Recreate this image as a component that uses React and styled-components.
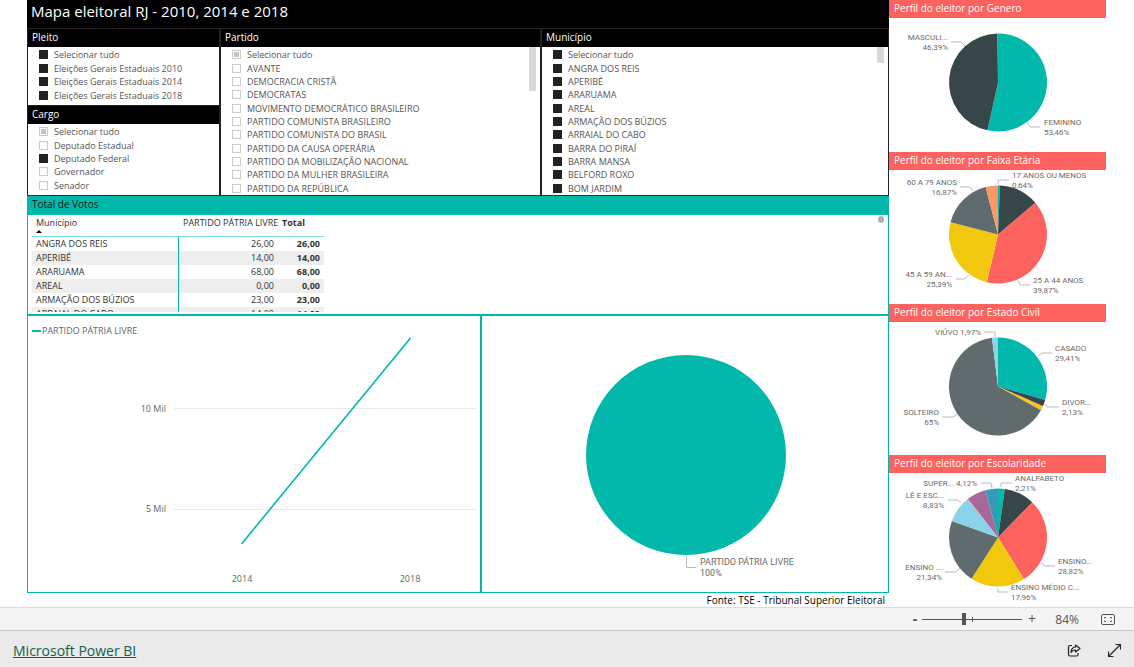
import React, { useState } from "react";
import styled, { createGlobalStyle } from "styled-components";

const TEAL = "#01b8aa";
const DARK = "#374649";
const RED = "#fd625e";
const YELLOW = "#f2c80f";
const GREY = "#5f6b6d";
const SKY = "#8ad4eb";
const ORANGE = "#fe9666";
const PURPLE = "#a66999";
const BLUE = "#3599b8";

const pleitos = [
  { name: "Selecionar tudo", state: "on" },
  { name: "Eleições Gerais Estaduais 2010", state: "on" },
  { name: "Eleições Gerais Estaduais 2014", state: "on" },
  { name: "Eleições Gerais Estaduais 2018", state: "on" },
];

const cargos = [
  { name: "Selecionar tudo", state: "partial" },
  { name: "Deputado Estadual" },
  { name: "Deputado Federal", state: "on" },
  { name: "Governador" },
  { name: "Senador" },
];

const partidos = [
  { name: "Selecionar tudo", state: "partial" },
  { name: "AVANTE" },
  { name: "DEMOCRACIA CRISTÃ" },
  { name: "DEMOCRATAS" },
  { name: "MOVIMENTO DEMOCRÁTICO BRASILEIRO" },
  { name: "PARTIDO COMUNISTA BRASILEIRO" },
  { name: "PARTIDO COMUNISTA DO BRASIL" },
  { name: "PARTIDO DA CAUSA OPERÁRIA" },
  { name: "PARTIDO DA MOBILIZAÇÃO NACIONAL" },
  { name: "PARTIDO DA MULHER BRASILEIRA" },
  { name: "PARTIDO DA REPÚBLICA" },
];

const municipios = [
  "Selecionar tudo",
  "ANGRA DOS REIS",
  "APERIBÉ",
  "ARARUAMA",
  "AREAL",
  "ARMAÇÃO DOS BÚZIOS",
  "ARRAIAL DO CABO",
  "BARRA DO PIRAÍ",
  "BARRA MANSA",
  "BELFORD ROXO",
  "BOM JARDIM",
].map(name => ({ name, state: "on" }));

const votos = [
  ["ANGRA DOS REIS", "26,00"],
  ["APERIBÉ", "14,00"],
  ["ARARUAMA", "68,00"],
  ["AREAL", "0,00"],
  ["ARMAÇÃO DOS BÚZIOS", "23,00"],
  ["ARRAIAL DO CABO", "14,00"],
];

const perfis = [
  {
    title: "Perfil do eleitor por Genero",
    slices: [
      [53.46, TEAL],
      [46.39, DARK],
      [0.15, RED],
    ],
    labels: [
      { x: 59, y: 22, end: true, lines: ["MASCULI...", "46,39%"], path: "62,24 72,24 76,28" },
      { x: 155, y: 107, lines: ["FEMININO", "53,46%"], path: "138,105 141,109 151,109" },
    ],
  },
  {
    title: "Perfil do eleitor por Faixa Etária",
    slices: [
      [0.64, TEAL],
      [13.16, DARK],
      [39.87, RED],
      [25.39, YELLOW],
      [16.87, GREY],
      [4.07, ORANGE],
    ],
    labels: [
      { x: 123, y: 8, lines: ["17 ANOS OU MENOS", "0,64%"], path: "109,14 109,10 120,10" },
      { x: 68, y: 15, end: true, lines: ["60 A 79 ANOS", "16,87%"], path: "71,17 81,17 84,21" },
      { x: 63, y: 107, end: true, lines: ["45 A 59 AN...", "25,39%"], path: "67,109 76,109 80,105" },
      { x: 144, y: 113, lines: ["25 A 44 ANOS", "39,87%"], path: "129,110 131,115 141,115" },
    ],
  },
  {
    title: "Perfil do eleitor por Estado Civil",
    slices: [
      [29.41, TEAL],
      [2.13, DARK],
      [0.2, RED],
      [1.29, YELLOW],
      [65, GREY],
      [1.97, SKY],
    ],
    labels: [
      { x: 92, y: 13, end: true, lines: ["VIÚVO 1,97%"], path: "95,10 106,10 106,15" },
      { x: 166, y: 29, lines: ["CASADO", "29,41%"], path: "149,34 153,31 163,31" },
      { x: 173, y: 83, lines: ["DIVOR...", "2,13%"], path: "155,82 159,85 170,85" },
      { x: 50, y: 93, end: true, lines: ["SOLTEIRO", "65%"], path: "53,95 64,95 69,92" },
    ],
  },
  {
    title: "Perfil do eleitor por Escolaridade",
    slices: [
      [2.21, TEAL],
      [10.1, DARK],
      [28.82, RED],
      [17.96, YELLOW],
      [21.34, GREY],
      [8.83, SKY],
      [0.25, ORANGE],
      [6.37, PURPLE],
      [4.12, BLUE],
    ],
    labels: [
      { x: 88, y: 13, end: true, lines: ["SUPER... 4,12%"], path: "92,10 102,10 103,15" },
      { x: 126, y: 8, lines: ["ANALFABETO", "2,21%"], path: "112,14 112,10 123,10" },
      { x: 55, y: 25, end: true, lines: ["LÊ E ESC...", "8,83%"], path: "59,27 69,27 72,30" },
      { x: 53, y: 97, end: true, lines: ["ENSINO ...", "21,34%"], path: "56,99 67,99 71,95" },
      { x: 122, y: 117, lines: ["ENSINO MÉDIO C...", "17,96%"], path: "109,115 109,119 119,119" },
      { x: 169, y: 91, lines: ["ENSINO...", "28,82%"], path: "152,90 156,93 166,93" },
    ],
  },
];

const slicePath = (cx, cy, r, from, to) => {
  const point = pct => {
    const a = (pct / 100) * Math.PI * 2;
    return `${cx + r * Math.sin(a)} ${cy - r * Math.cos(a)}`;
  };
  return `M${cx} ${cy}L${point(from)}A${r} ${r} 0 ${to - from > 50 ? 1 : 0} 1 ${point(to)}Z`;
};

function Slicer({ title, items, thumb, compact }) {
  return (
    <SlicerPanel>
      <SlicerTitle>{title}</SlicerTitle>
      <SlicerBody $compact={compact}>
        <Options>
          {items.map(item => (
            <Option key={item.name}>
              <Check
                type='checkbox'
                defaultChecked={item.state === "on"}
                $partial={item.state === "partial"}
              />
              {item.name}
            </Option>
          ))}
        </Options>
        {thumb && <ScrollThumb $size={thumb} />}
      </SlicerBody>
    </SlicerPanel>
  );
}

function Perfil({ title, slices, labels }) {
  let total = 0;
  return (
    <PerfilCard>
      <PerfilTitle>{title}</PerfilTitle>
      <PerfilChart viewBox='0 0 217 133' role='img' aria-label={title}>
        {slices.map(([value, color], i) => {
          const from = total;
          total += value;
          return <path key={i} d={slicePath(109, 64.5, 49, from, total)} fill={color} />;
        })}
        {labels.map(label => (
          <g key={label.lines[0]}>
            <Leader points={label.path} />
            {label.lines.map((line, i) => (
              <PieText key={line} x={label.x} y={label.y + i * 10} $end={label.end}>
                {line}
              </PieText>
            ))}
          </g>
        ))}
      </PerfilChart>
    </PerfilCard>
  );
}

function App() {
  const [zoom, setZoom] = useState(84);

  return (
    <>
      <GlobalStyle />
      <Report>
        <Main>
          <Title>Mapa eleitoral RJ - 2010, 2014 e 2018</Title>
          <Slicers>
            <SlicerStack>
              <Slicer title='Pleito' items={pleitos} compact />
              <Slicer title='Cargo' items={cargos} compact />
            </SlicerStack>
            <Slicer title='Partido' items={partidos} thumb={44} />
            <Slicer title='Município' items={municipios} thumb={16} />
          </Slicers>

          <Votes>
            <VotesTitle>Total de Votos</VotesTitle>
            <VotesBody>
              <VotesTable>
                <thead>
                  <tr>
                    <th>
                      Município
                      <SortMark viewBox='0 0 6 3'>
                        <path d='M0 3L3 0L6 3Z' />
                      </SortMark>
                    </th>
                    <th>PARTIDO PÁTRIA LIVRE</th>
                    <th>Total</th>
                  </tr>
                </thead>
                <tbody>
                  {votos.map(([name, total]) => (
                    <tr key={name}>
                      <td>{name}</td>
                      <td>{total}</td>
                      <td>{total}</td>
                    </tr>
                  ))}
                </tbody>
              </VotesTable>
              <VotesThumb />
            </VotesBody>
          </Votes>

          <Charts>
            <ChartPanel>
              <Chart viewBox='0 0 452 276' role='img' aria-label='Votos por ano'>
                <path d='M4 15H13' stroke={TEAL} strokeWidth='2' />
                <AxisText x='14' y='18'>
                  PARTIDO PÁTRIA LIVRE
                </AxisText>
                <path d='M146 92.5H449M146 193.5H449' stroke='#eaeaea' />
                <AxisText x='138' y='96' $anchor='end'>
                  10 Mil
                </AxisText>
                <AxisText x='138' y='196' $anchor='end'>
                  5 Mil
                </AxisText>
                <AxisText x='214' y='266' $anchor='middle'>
                  2014
                </AxisText>
                <AxisText x='382' y='266' $anchor='middle'>
                  2018
                </AxisText>
                <path d='M213.5 228L382.5 22' stroke={TEAL} strokeWidth='1.6' />
              </Chart>
            </ChartPanel>
            <ChartPanel>
              <Chart viewBox='0 0 406 276' role='img' aria-label='Votos por partido'>
                <circle cx='204' cy='139' r='100' fill={TEAL} />
                <Leader points='204.5,241 204.5,251.5 214,251.5' />
                <PieText x='218' y='249' $large>
                  PARTIDO PÁTRIA LIVRE
                </PieText>
                <PieText x='218' y='260' $large>
                  100%
                </PieText>
              </Chart>
            </ChartPanel>
          </Charts>
          <Source>Fonte: TSE - Tribunal Superior Eleitoral</Source>
        </Main>

        <Side>
          {perfis.map(perfil => (
            <Perfil key={perfil.title} {...perfil} />
          ))}
        </Side>
      </Report>

      <ZoomBar>
        <ZoomButton aria-label='Diminuir' $bold onClick={() => setZoom(zoom - 1)}>
          -
        </ZoomButton>
        <ZoomSlider
          type='range'
          min='0'
          max='200'
          aria-label='Zoom'
          value={zoom}
          onChange={e => setZoom(Number(e.target.value))}
        />
        <ZoomButton aria-label='Aumentar' onClick={() => setZoom(zoom + 1)}>
          +
        </ZoomButton>
        <ZoomValue>{zoom}%</ZoomValue>
        <IconButton aria-label='Ajustar à página'>
          <svg width='14' height='11' viewBox='0 0 14 11' fill='none' stroke='#555'>
            <rect x='0.5' y='0.5' width='13' height='10' rx='1.5' />
            <path d='M3.5 4.5V3.5H5M9 3.5H10.5V4.5M10.5 6.5V7.5H9M5 7.5H3.5V6.5' />
          </svg>
        </IconButton>
      </ZoomBar>

      <Footer>
        <BrandLink href='#'>Microsoft Power BI</BrandLink>
        <IconButton aria-label='Compartilhar'>
          <svg width='14' height='13' viewBox='0 0 14 13' fill='none' stroke='#222'>
            <path d='M5 1.5H3Q1.5 1.5 1.5 3V10.5Q1.5 12 3 12H9.5Q11 12 11 10.5V9' strokeWidth='1.2' />
            <path
              d='M8.5 1L13 4.5L8.5 8V6Q5.5 5.8 4 8.5Q4.2 3.5 8.5 3Z'
              strokeWidth='1.2'
              strokeLinejoin='round'
            />
          </svg>
        </IconButton>
        <IconButton aria-label='Tela inteira'>
          <svg width='13' height='13' viewBox='0 0 13 13' fill='none' stroke='#222'>
            <path d='M0.5 12.5L12.5 0.5M7.5 0.5H12.5V5.5M0.5 7.5V12.5H5.5' strokeWidth='1.2' />
          </svg>
        </IconButton>
      </Footer>
    </>
  );
}

const GlobalStyle = createGlobalStyle`
  * {
    box-sizing: border-box;
  }
  body {
    margin: 0;
    background: #fff;
    color: #333;
    font-family: "Open Sans", "Noto Sans", sans-serif;
    font-size: 9px;
  }
  button {
    padding: 0;
    border: 0;
    background: none;
    font-family: inherit;
    color: inherit;
  }
`;

const Report = styled.div`
  display: grid;
  grid-template-columns: minmax(0, 1fr) 217px;
  padding: 0 28px 0 27px;
`;

const Main = styled.main`
  display: flex;
  flex-direction: column;
`;

const Title = styled.h1`
  height: 28px;
  margin: 0;
  padding-left: 4px;
  background: #000;
  color: #fff;
  font-size: 15px;
  font-weight: 400;
  line-height: 22px;
`;

const Slicers = styled.div`
  display: grid;
  grid-template-columns: 193fr 321fr 348fr;
  height: 168px;
  border-bottom: 1px solid #333;
`;

const SlicerStack = styled.div`
  display: grid;
  grid-template-rows: 77px 1fr;
`;

const SlicerPanel = styled.section`
  display: flex;
  flex-direction: column;
  border: 1px solid #222;
  border-width: 1px 1px 0;
`;

const SlicerTitle = styled.h2`
  height: 18px;
  margin: 0;
  padding-left: 4px;
  background: #000;
  color: #fff;
  font-size: 10px;
  font-weight: 400;
  line-height: 16px;
`;

const SlicerBody = styled.div`
  display: flex;
  flex: 1;
  padding: 0 4px ${({ $compact }) => ($compact ? 3 : 0)}px 11px;
`;

const Options = styled.div`
  display: grid;
  grid-auto-rows: 1fr;
  flex: 1;
  padding-top: 1px;
`;

const Option = styled.label`
  display: flex;
  align-items: center;
  gap: 6px;
  color: #555;
  line-height: 13px;
`;

const Check = styled.input`
  appearance: none;
  width: 9px;
  height: 9px;
  margin: 0;
  border: 1px solid #ccc;
  background: ${({ $partial }) => ($partial ? "#c4c4c4" : "#fff")};
  box-shadow: inset 0 0 0 1px #fff;

  &:checked {
    border-color: #222;
    background: #222;
    box-shadow: none;
  }
`;

const ScrollThumb = styled.div`
  width: 7px;
  height: ${({ $size }) => $size}px;
  background: #d9d9d9;
`;

const Votes = styled.section`
  height: 120px;
  border: 1px solid ${TEAL};
  border-width: 0 1px 2px;
`;

const VotesTitle = styled.h2`
  height: 19px;
  margin: 0;
  padding-left: 4px;
  background: ${TEAL};
  color: #111;
  font-size: 10px;
  font-weight: 400;
  line-height: 17px;
`;

const VotesBody = styled.div`
  display: flex;
  align-items: flex-start;
  justify-content: space-between;
  height: 97px;
  padding: 0 4px;
  overflow: hidden;
`;

const VotesTable = styled.table`
  width: 292px;
  border-spacing: 0;
  table-layout: fixed;

  th {
    height: 22px;
    padding: 1px 4px 0;
    border-bottom: 1px solid #80dbd4;
    font-weight: 400;
    line-height: 14px;
    text-align: left;
    vertical-align: top;
    white-space: nowrap;
  }
  th:first-child {
    width: 147px;
  }
  th:last-child {
    width: 46px;
    font-weight: 700;
  }
  td {
    height: 14px;
    padding: 0 4px;
    line-height: 14px;
    text-align: right;
  }
  td:first-child {
    border-right: 1px solid ${TEAL};
    text-align: left;
  }
  td:last-child {
    font-weight: 700;
  }
  tbody tr:nth-child(even) {
    background: #eee;
  }
`;

const SortMark = styled.svg`
  display: block;
  width: 6px;
  height: 3px;
`;

const VotesThumb = styled.div`
  width: 6px;
  height: 7px;
  margin-top: 1px;
  border-radius: 3px;
  background: #b3b3b3;
`;

const Charts = styled.div`
  display: grid;
  grid-template-columns: 454fr 408fr;
`;

const ChartPanel = styled.section`
  border: 1px solid ${TEAL};
  border-top: 0;
`;

const Chart = styled.svg`
  display: block;
  width: 100%;
  height: 276px;
`;

const AxisText = styled.text`
  fill: #666;
  text-anchor: ${({ $anchor }) => $anchor || "start"};
`;

const Leader = styled.polyline`
  fill: none;
  stroke: #bbb;
`;

const Source = styled.p`
  height: 14px;
  margin: 0;
  padding-right: 4px;
  color: #000;
  font-size: 10px;
  line-height: 15px;
  text-align: right;
`;

const Side = styled.aside`
  display: grid;
  grid-template-rows: repeat(4, 1fr);
`;

const PerfilCard = styled.section`
  overflow: hidden;
`;

const PerfilTitle = styled.h2`
  height: 18px;
  margin: 0;
  padding-left: 5px;
  background: ${RED};
  color: #fff;
  font-size: 10px;
  font-weight: 400;
  line-height: 16px;
`;

const PerfilChart = styled.svg`
  display: block;
  width: 100%;
  height: 133px;
`;

const PieText = styled.text`
  fill: #6b6b6b;
  font-family: Roboto, sans-serif;
  font-size: ${({ $large }) => ($large ? 9 : 8)}px;
  text-anchor: ${({ $end }) => ($end ? "end" : "start")};
`;

const ZoomBar = styled.div`
  display: flex;
  align-items: center;
  justify-content: flex-end;
  height: 23px;
  padding-right: 19px;
  border-top: 1px solid #dcdcdc;
  background: #f4f4f4;
  color: #555;
`;

const ZoomButton = styled.button`
  width: 14px;
  font-size: 14px;
  font-weight: ${({ $bold }) => ($bold ? 700 : 400)};
  line-height: 20px;
`;

const ZoomSlider = styled.input`
  appearance: none;
  width: 100px;
  height: 12px;
  margin: 0 3px 0 0;
  background: linear-gradient(#555, #555) center / 100% 1px no-repeat,
    linear-gradient(#555, #555) center / 1px 5px no-repeat;

  &::-webkit-slider-thumb {
    appearance: none;
    width: 4px;
    height: 12px;
    background: #555;
  }
`;

const ZoomValue = styled.span`
  width: 40px;
  margin-right: 22px;
  font-size: 12px;
  text-align: right;
`;

const IconButton = styled.button`
  display: flex;
`;

const Footer = styled.footer`
  display: flex;
  align-items: center;
  gap: 27px;
  height: 37px;
  padding: 3px 13px 0;
  border-top: 1px solid #c8c8c8;
  background: #eaeaea;
`;

const BrandLink = styled.a`
  margin-right: auto;
  color: #0f6251;
  font-size: 14px;
`;

export default App;
